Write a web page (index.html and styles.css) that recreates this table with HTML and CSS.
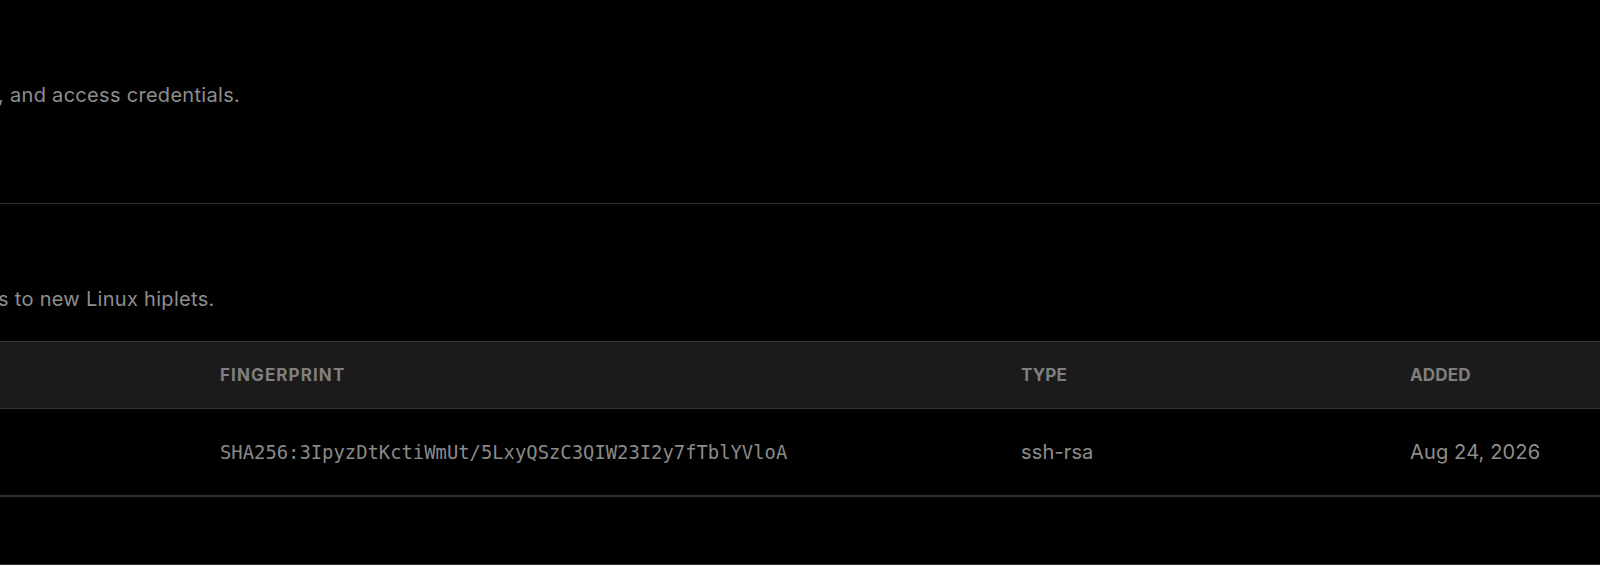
FILE: index.html
```html
<!DOCTYPE html>
<html lang="en">
<head>
<meta charset="utf-8">
<title>SSH Keys</title>
<link rel="stylesheet" href="styles.css">
</head>
<body>
  <section class="section section-top">
    <p class="desc desc-top">, and access credentials.</p>
  </section>
  <section class="section section-keys">
    <p class="desc desc-keys">s to new Linux hiplets.</p>
    <div class="table">
      <div class="tr thead">
        <div class="cell cell-name"></div>
        <div class="cell cell-fp">Fingerprint</div>
        <div class="cell cell-type">Type</div>
        <div class="cell cell-added">Added</div>
      </div>
      <div class="tr trow">
        <div class="cell cell-name"></div>
        <div class="cell cell-fp mono">SHA256:3IpyzDtKctiWmUt/5LxyQSzC3QIW23I2y7fTblYVloA</div>
        <div class="cell cell-type">ssh-rsa</div>
        <div class="cell cell-added">Aug 24, 2026</div>
      </div>
    </div>
  </section>
  <section class="section section-next"></section>
</body>
</html>
```
FILE: styles.css
```css
* { box-sizing: border-box; }
html, body {
  margin: 0;
  padding: 0;
  background: #000;
  height: 100%;
  overflow: hidden;
}
body {
  font-family: Inter, "Noto Sans", sans-serif;
  color: #8f8f8f;
}
.section {
  border-bottom: 1px solid #2f2f2f;
}
.desc {
  margin: 0;
  font-size: 20px;
  line-height: 28px;
  letter-spacing: 0.3px;
  color: #8e8e8e;
  margin-left: -2px;
  white-space: nowrap;
}
.section-top {
  padding-top: 81px;
  padding-bottom: 94px;
}
.section-keys {
  padding-top: 81px;
  padding-bottom: 0;
}
.desc-keys {
  margin-bottom: 28px;
}
.table {
  border-top: 1px solid #333;
}
.tr {
  display: grid;
  grid-template-columns: 196px 801px 389px 1fr;
  align-items: center;
}
.thead {
  height: 67px;
  background: #1b1b1b;
  border-bottom: 1px solid #333;
  font-size: 17px;
  font-weight: 700;
  letter-spacing: 0.065em;
  text-transform: uppercase;
  color: #7f7f7f;
}
.trow {
  height: 86px;
  font-size: 20px;
  color: #8e8e8e;
}
.cell {
  padding-left: 24px;
  white-space: nowrap;
}
.mono {
  font-family: "DejaVu Sans Mono", "Liberation Mono", monospace;
  font-size: 18.85px;
  letter-spacing: 0;
  color: #8a8a8a;
}
.cell-type, .cell-added {
  letter-spacing: 0.15px;
}
.section-next {
  height: 69px;
  border-top: 1px solid #2f2f2f;
  border-bottom: 1px solid #2f2f2f;
}
```
